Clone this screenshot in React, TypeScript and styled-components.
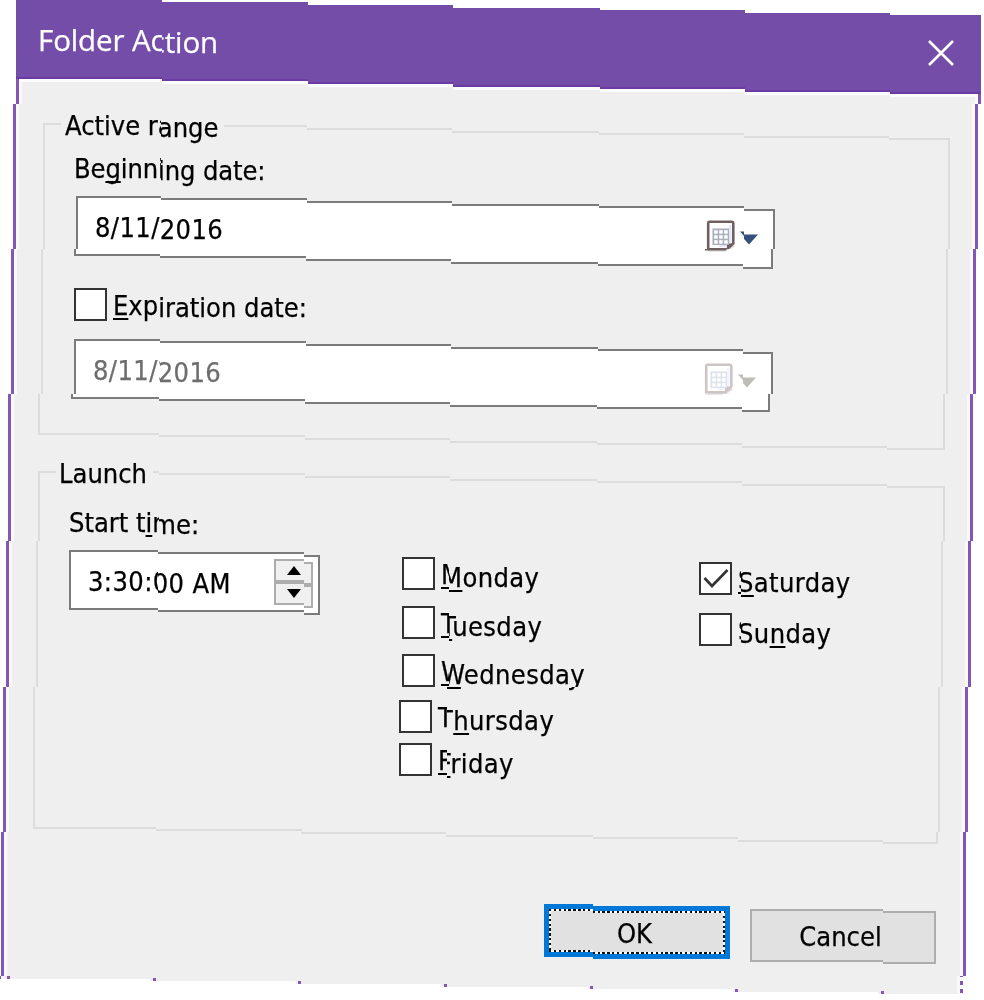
import React from "react";
import styled, { createGlobalStyle } from "styled-components";

const GlobalStyle = createGlobalStyle`
  body { margin: 0; background: #fff; overflow: hidden; }
  * { box-sizing: border-box; }
`;

/* The dialog is tilted by nudging a grid of tiles: columns move down, rows move left. */
const COLUMN_SHIFT = [-5, -3, 0, 3, 5, 8, 10];
const ROW_SHIFT = [8, 5, 3, 0, -2, -5, -7, -10];
const COLUMN_EDGES = [0, 162, 308, 453, 600, 745, 890, 1000];
const COLUMN_DRIFT = [0, 1, 2, 3, 4, 6, 7, 12];
const ROW_EDGES = [0, 104, 249, 394, 541, 687, 832, 976, 1000];

const tiles = ROW_SHIFT.flatMap((dx, r) =>
  COLUMN_SHIFT.map((dy, c) => {
    const drift = COLUMN_DRIFT[r];
    const left = c === 0 ? 0 : COLUMN_EDGES[c] - drift;
    const right = c === COLUMN_SHIFT.length - 1 ? 984 : COLUMN_EDGES[c + 1] - drift;
    return {
      id: `tile-${r}-${c}`,
      dx,
      dy,
      x: left,
      y: ROW_EDGES[r],
      width: right - left,
      height: ROW_EDGES[r + 1] - ROW_EDGES[r],
    };
  })
);

const TiltFilter = () => (
  <HiddenSvg width="0" height="0" aria-hidden="true">
    <filter
      id="tilt"
      filterUnits="userSpaceOnUse"
      primitiveUnits="userSpaceOnUse"
      colorInterpolationFilters="sRGB"
      x="0"
      y="0"
      width="984"
      height="1000"
    >
      {tiles.map((t) => (
        <feOffset
          key={t.id}
          in="SourceGraphic"
          dx={t.dx}
          dy={t.dy}
          x={t.x}
          y={t.y}
          width={t.width}
          height={t.height}
          result={t.id}
        />
      ))}
      <feMerge>
        {tiles.map((t) => (
          <feMergeNode key={t.id} in={t.id} />
        ))}
      </feMerge>
    </filter>
  </HiddenSvg>
);

const HiddenSvg = styled.svg`
  position: absolute;
`;

const Desktop = styled.div`
  width: 984px;
  height: 1000px;
  padding: 5px 0 0 8px;
  background: #fff;
  filter: url(#tilt);
  font-family: "DejaVu Sans Condensed", "DejaVu Sans", sans-serif;
  font-stretch: condensed;
  font-size: 27px;
  line-height: 32px;
  color: #000;
  -webkit-text-stroke: 0.25px;
`;

const Dialog = styled.div`
  width: 965px;
`;

const TitleBar = styled.header`
  display: flex;
  justify-content: space-between;
  height: 79px;
  padding: 17px 27px 0 22px;
  background: #744da9;
  border-bottom: 2px solid #6b3aa3;
`;

const Title = styled.h1`
  margin: 0;
  font: 400 29.5px/46px "Open Sans", "Noto Sans", sans-serif;
  letter-spacing: -0.1px;
  color: #fff;
`;

const CloseButton = styled.button`
  display: flex;
  width: 26px;
  height: 26px;
  margin: 8px 0 0;
  padding: 0;
  border: 0;
  background: none;
`;

const Body = styled.main`
  position: relative;
  height: 900px;
  padding: 44px 25px 0 27px;
  border: solid #8258b4;
  border-width: 0 3px;
  background: #efefef;
  box-shadow: inset 0 3px #fcfcfc, inset 3px 0 #f9f9f9, inset -3px 0 #f9f9f9;
`;

const BottomEdge = styled.div`
  position: absolute;
  left: 6px;
  right: 0;
  bottom: 0;
  height: 3px;
  background: repeating-linear-gradient(90deg, #8258b4 0 3px, transparent 3px 145.7px);
`;

const RightEdge = styled.div`
  position: absolute;
  right: -3px;
  bottom: 0;
  width: 3px;
  height: 17px;
  background: linear-gradient(#fff 0 4px, #8258b4 4px 8px, #fff 8px 12px, #8258b4 12px 16px, #fff 16px);
`;

const Group = styled.section<{ $height: number }>`
  height: ${(p) => p.$height}px;
  margin-bottom: 36px;
  border: 2px solid #dcdcdc;
`;

const Legend = styled.h2<{ $pad: string }>`
  width: fit-content;
  margin: -15px 0 0 16px;
  padding: ${(p) => p.$pad};
  background: #efefef;
  font: inherit;
`;

const RangeFields = styled.div`
  padding: 11px 0 0 31px;
`;

const Caption = styled.div<{ $spacing?: number }>`
  margin: 0 0 11px -2px;
  letter-spacing: ${(p) => p.$spacing ?? 0}px;
`;

const Mnemonic = styled.span`
  text-decoration: underline;
  text-decoration-thickness: 2px;
  text-underline-offset: 3px;
  text-decoration-skip-ink: none;
`;

const Field = styled.div<{ $width: number; $disabled?: boolean }>`
  display: flex;
  align-items: center;
  width: ${(p) => p.$width}px;
  height: 60px;
  padding-left: 17px;
  border: 2px solid #7b7b7b;
  background: #fff;
  color: ${(p) => (p.$disabled ? "#6d6d6d" : "#000")};
`;

const Value = styled.span`
  flex: 1;
  padding-top: 3px;
  letter-spacing: 0.4px;
`;

const Picker = styled.div<{ $disabled?: boolean }>`
  display: flex;
  align-items: center;
  gap: 5px;
  padding-right: 15px;
`;

const CheckRow = styled.label<{ $after?: number; $before?: number; $spacing: number }>`
  display: flex;
  align-items: center;
  gap: 6px;
  height: 33px;
  margin-top: ${(p) => p.$before ?? 0}px;
  margin-bottom: ${(p) => p.$after ?? 0}px;
  letter-spacing: ${(p) => p.$spacing}px;
`;

const Box = styled.span`
  display: flex;
  flex: none;
  width: 33px;
  height: 33px;
  border: 2px solid #333;
  background: #fff;
`;

const CheckLabel = styled.span`
  padding-top: 3px;
`;

const Schedule = styled.div`
  display: flex;
  padding-left: 31px;
`;

const StartTime = styled.div`
  width: 333px;
  padding-top: 17px;
`;

const DayColumn = styled.div<{ $width: number }>`
  width: ${(p) => p.$width}px;
  padding-top: 62px;
`;

const Spinner = styled.div`
  display: flex;
  flex-direction: column;
  width: 39px;
  margin-right: 5px;
`;

const SpinButton = styled.button`
  display: flex;
  align-items: center;
  justify-content: center;
  height: 23px;
  padding: 0;
  border: 2px solid #adadad;
  background: #f0f0f0;
`;

const Actions = styled.footer`
  display: flex;
  justify-content: flex-end;
  gap: 20px;
  margin-top: 67px;
  padding-right: 2px;
`;

const Button = styled.button<{ $primary?: boolean }>`
  width: 186px;
  height: 53px;
  padding: 0;
  border: ${(p) => (p.$primary ? "5px solid #0078d7" : "2px solid #adadad")};
  background: #e1e1e1;
  font: inherit;
  color: #000;
`;

const ButtonFace = styled.span<{ $focus?: boolean }>`
  display: flex;
  align-items: center;
  justify-content: center;
  height: 100%;
  padding: 2px 5px 0 0;
  ${(p) =>
    p.$focus &&
    `
    --ink: #111 0 2.4px, #fff 2.4px 4.85px;
    background:
      repeating-linear-gradient(90deg, var(--ink)) top / 100% 2px no-repeat,
      repeating-linear-gradient(90deg, var(--ink)) bottom / 100% 2px no-repeat,
      repeating-linear-gradient(var(--ink)) left / 2px 100% no-repeat,
      repeating-linear-gradient(var(--ink)) right / 2px 100% no-repeat;
  `}
`;

const CalendarIcon = ({ disabled }: { disabled?: boolean }) => {
  const frame = disabled ? "#cdc4c4" : "#705f60";
  const grid = disabled ? "#dde2eb" : "#a9aebb";
  return (
    <svg width="29" height="32" viewBox="0 0 29 32">
      <path d="M4 30.5H21L28 25.5" fill="none" stroke="#dedede" strokeWidth="2.5" />
      <path
        d="M3.5 1.7H25.5Q27.3 1.7 27.3 3.5V23.5L21 29.2H2.2V3.5Q2.2 1.7 3.5 1.7Z"
        fill="#fff"
        stroke={frame}
        strokeWidth="2.6"
      />
      <path d="M23 5h2.5v17l-5 5H12l11-9z" fill={disabled ? "#f1f4fa" : "#dfe9f6"} />
      <path d="M21 29V23.5H27.5Z" fill={frame} />
      <rect x="6.5" y="8.5" width="16.5" height="16.5" fill={grid} />
      <g fill="#fff">
        {[0, 1, 2].flatMap((r) =>
          [0, 1, 2].map((c) => (
            <rect key={`${r}${c}`} x={8.2 + c * 5} y={10.2 + r * 5} width="3.5" height="3.5" />
          ))
        )}
      </g>
    </svg>
  );
};

const DropArrow = ({ disabled }: { disabled?: boolean }) => (
  <svg width="18" height="11" viewBox="0 0 18 11">
    <path d="M0 .5H18L9 10.5Z" fill={disabled ? "#bdbdb5" : "#34507f"} />
  </svg>
);

const DateField = ({ value, disabled }: { value: string; disabled?: boolean }) => (
  <Field $width={699} $disabled={disabled}>
    <Value>{value}</Value>
    <Picker>
      <CalendarIcon disabled={disabled} />
      <DropArrow disabled={disabled} />
    </Picker>
  </Field>
);

type CheckProps = {
  text: [string, string, string];
  checked?: boolean;
  before?: number;
  after?: number;
  spacing?: number;
};

const Check = ({ text, checked, before, after, spacing = 0.4 }: CheckProps) => (
  <CheckRow $before={before} $after={after} $spacing={spacing}>
    <Box>
      {checked && (
        <svg width="29" height="29" viewBox="0 0 29 29">
          <path d="M3.5 14L11 22L26.5 6" fill="none" stroke="#333" strokeWidth="2.6" />
        </svg>
      )}
    </Box>
    <CheckLabel>
      {text[0]}
      <Mnemonic>{text[1]}</Mnemonic>
      {text[2]}
    </CheckLabel>
  </CheckRow>
);

export default function App() {
  return (
    <>
      <GlobalStyle />
      <TiltFilter />
      <Desktop>
        <Dialog>
          <TitleBar>
            <Title>Folder Action</Title>
            <CloseButton aria-label="Close">
              <svg width="26" height="26" viewBox="0 0 26 26">
                <path d="M1 1L25 25M25 1L1 25" stroke="#fff" strokeWidth="2.6" />
              </svg>
            </CloseButton>
          </TitleBar>
          <Body>
            <Group $height={312}>
              <Legend $pad="0 6px 0 4px">Active range</Legend>
              <RangeFields>
                <Caption $spacing={-0.1}>
                  Be<Mnemonic>g</Mnemonic>inning date:
                </Caption>
                <DateField value="8/11/2016" />
                <Check text={["", "E", "xpiration date:"]} before={32} after={18} spacing={0} />
                <DateField value="8/11/2016" disabled />
              </RangeFields>
            </Group>
            <Group $height={358}>
              <Legend $pad="0 6px 0 3px">Launch</Legend>
              <Schedule>
                <StartTime>
                  <Caption>
                    Start t<Mnemonic>i</Mnemonic>me:
                  </Caption>
                  <Field $width={251}>
                    <Value>3:30:00 AM</Value>
                    <Spinner>
                      <SpinButton aria-label="Later">
                        <svg width="14" height="9" viewBox="0 0 14 9">
                          <path d="M0 9L7 0L14 9Z" />
                        </svg>
                      </SpinButton>
                      <SpinButton aria-label="Earlier">
                        <svg width="14" height="9" viewBox="0 0 14 9">
                          <path d="M0 0L7 9L14 0Z" />
                        </svg>
                      </SpinButton>
                    </Spinner>
                  </Field>
                </StartTime>
                <DayColumn $width={297}>
                  <Check text={["", "M", "onday"]} after={15.5} />
                  <Check text={["", "T", "uesday"]} after={15} />
                  <Check text={["", "W", "ednesday"]} after={13} />
                  <Check text={["T", "h", "ursday"]} after={10.5} />
                  <Check text={["", "F", "riday"]} />
                </DayColumn>
                <DayColumn $width={200}>
                  <Check text={["", "S", "aturday"]} checked after={18} />
                  <Check text={["Su", "n", "day"]} />
                </DayColumn>
              </Schedule>
            </Group>
            <Actions>
              <Button $primary>
                <ButtonFace $focus>OK</ButtonFace>
              </Button>
              <Button>
                <ButtonFace>Cancel</ButtonFace>
              </Button>
            </Actions>
            <BottomEdge />
            <RightEdge />
          </Body>
        </Dialog>
      </Desktop>
    </>
  );
}
